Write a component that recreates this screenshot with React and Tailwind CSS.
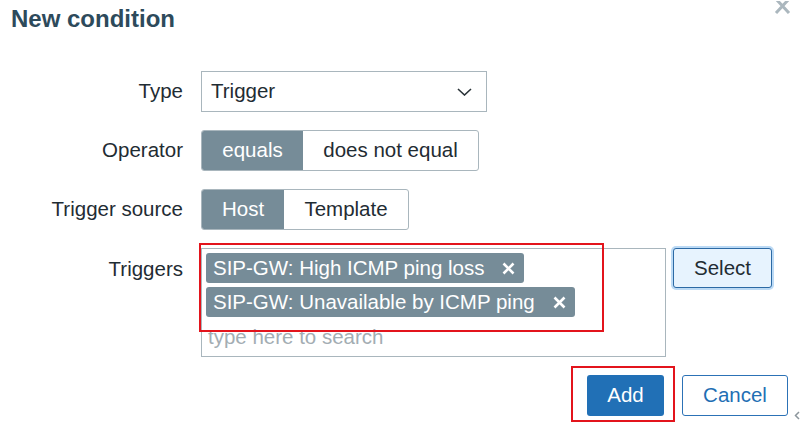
import React from "react";

const FONT = { fontFamily: '"Liberation Sans", Arial, sans-serif' };

function TagX() {
  return (
    <svg width="13" height="13" viewBox="0 0 13 13" className="shrink-0">
      <path d="M1.5 1.5 L11.5 11.5 M11.5 1.5 L1.5 11.5" stroke="#fff" strokeWidth="2.6" strokeLinecap="butt" />
    </svg>
  );
}

function Tag({ label, width }) {
  return (
    <div className={`flex h-[30px] items-center justify-between rounded-[3px] bg-[#768c98] pl-[7px] pr-[9px] text-white ${width}`}>
      <span>{label}</span>
      <TagX />
    </div>
  );
}

export default function App() {
  return (
    <div
      className="relative h-[441px] w-[800px] overflow-hidden bg-white text-[20.5px] leading-none text-[#1f2c33]"
      style={FONT}
    >
      {/* header */}
      <div className="pl-[11px] pt-[5px] text-[24px] font-bold leading-[28px] text-[#2d4a5b]">
        New condition
      </div>
      <svg className="absolute right-[9px] top-[1px]" width="17" height="13" viewBox="0 0 17 13">
        <path d="M2 -2 L15 12 M15 -2 L2 12" stroke="#abb7be" strokeWidth="3" />
      </svg>

      {/* form */}
      <div className="mt-[38px] flex flex-col gap-[18px]">
        <div className="flex h-[41px] items-center">
          <div className="w-[183px] text-right">Type</div>
          <div className="ml-[18px] flex h-[41px] w-[286px] items-center justify-between border border-[#a9b6bd] pl-[9px] pr-[14px]">
            <span>Trigger</span>
            <svg width="15" height="8" viewBox="0 0 15 8">
              <path d="M1 1 L7.5 7 L14 1" fill="none" stroke="#2a3338" strokeWidth="1.6" />
            </svg>
          </div>
        </div>

        <div className="flex h-[41px] items-center">
          <div className="w-[183px] text-right">Operator</div>
          <div className="ml-[18px] flex h-[41px] overflow-hidden rounded-[3px] border border-[#a9b6bd]">
            <div className="flex w-[101px] items-center justify-center bg-[#768c98] text-white">equals</div>
            <div className="flex w-[175px] items-center justify-center">does not equal</div>
          </div>
        </div>

        <div className="flex h-[41px] items-center">
          <div className="w-[183px] text-right">Trigger source</div>
          <div className="ml-[18px] flex h-[41px] overflow-hidden rounded-[3px] border border-[#a9b6bd]">
            <div className="flex w-[82px] items-center justify-center bg-[#768c98] text-white">Host</div>
            <div className="flex w-[124px] items-center justify-center">Template</div>
          </div>
        </div>

        <div className="flex items-start">
          <div className="w-[183px] pt-[11px] text-right">Triggers</div>
          <div className="ml-[18px] flex h-[109px] w-[465px] flex-col items-start gap-[4px] border border-[#a9b6bd] pl-[4px] pt-[4px]">
            <Tag label="SIP-GW: High ICMP ping loss" width="w-[318px]" />
            <Tag label="SIP-GW: Unavailable by ICMP ping" width="w-[369px]" />
            <div className="pl-[2px] pt-[6px] text-[#a3adb3]">type here to search</div>
          </div>
          <div className="ml-[7px] flex h-[40px] w-[99px] items-center justify-center rounded-[3px] border border-[#2c6aa5] bg-[#e7f3fe] shadow-[0_0_0_2px_#bcdaf5]">
            Select
          </div>
        </div>

        <div className="flex justify-end gap-[18px] pr-[12px]">
          <div className="flex h-[41px] w-[77px] items-center justify-center rounded-[3px] bg-[#2170b6] text-white">
            Add
          </div>
          <div className="flex h-[41px] w-[106px] items-center justify-center rounded-[3px] border border-[#2c72b6] text-[#1f6fb4]">
            Cancel
          </div>
        </div>
      </div>

      {/* resize hint */}
      <svg className="absolute left-[794px] top-[411px]" width="6" height="9" viewBox="0 0 6 9">
        <path d="M5 1 L1.5 4.5 L5 8" fill="none" stroke="#8c969c" strokeWidth="1.5" />
      </svg>

      {/* red annotation frames */}
      <div className="absolute left-[199px] top-[243px] h-[89px] w-[405px] border-2 border-[#e3141c]" />
      <div className="absolute left-[571px] top-[366px] h-[56px] w-[104px] border-2 border-[#e3141c]" />
    </div>
  );
}
